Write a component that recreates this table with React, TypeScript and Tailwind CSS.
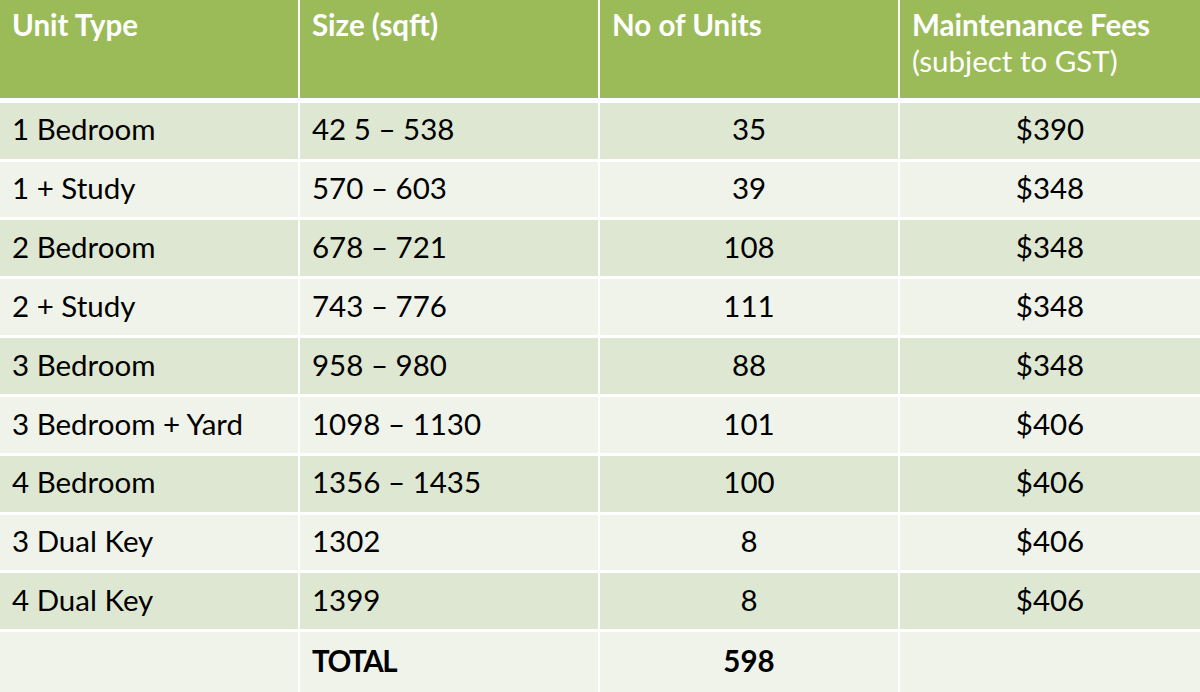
import React from 'react';

interface UnitRow {
  type: string;
  size: string;
  units: string;
  fee: string;
}

const rows: UnitRow[] = [
  { type: '1 Bedroom', size: '42 5 – 538', units: '35', fee: '$390' },
  { type: '1 + Study', size: '570 – 603', units: '39', fee: '$348' },
  { type: '2 Bedroom', size: '678 – 721', units: '108', fee: '$348' },
  { type: '2 + Study', size: '743 – 776', units: '111', fee: '$348' },
  { type: '3 Bedroom', size: '958 – 980', units: '88', fee: '$348' },
  { type: '3 Bedroom + Yard', size: '1098 – 1130', units: '101', fee: '$406' },
  { type: '4 Bedroom', size: '1356 – 1435', units: '100', fee: '$406' },
  { type: '3 Dual Key', size: '1302', units: '8', fee: '$406' },
  { type: '4 Dual Key', size: '1399', units: '8', fee: '$406' },
];

const cols = 'grid grid-cols-[298px_298px_298px_300px] gap-x-[2px]';

const App: React.FC = () => {
  return (
    <div
      className="w-[1200px] h-[692px] bg-white flex flex-col gap-[3px] overflow-hidden text-[29.5px] leading-none text-black"
      style={{ fontFamily: 'Lato, "Open Sans", sans-serif' }}
    >
      <div className={`${cols} h-[98px] mb-[2px] text-white`}>
        <div className="bg-[#9bbb59] px-3 pt-[10px] font-bold">Unit Type</div>
        <div className="bg-[#9bbb59] px-3 pt-[10px] font-bold">Size (sqft)</div>
        <div className="bg-[#9bbb59] px-3 pt-[10px] font-bold">No of Units</div>
        <div className="bg-[#9bbb59] px-3 pt-[10px] leading-[38px]">
          <div className="font-bold -mt-[4px]">Maintenance Fees</div>
          <div className="-mt-[2px]">(subject to GST)</div>
        </div>
      </div>
      {rows.map((r, i) => {
        const bg = i % 2 === 0 ? 'bg-[#dee7d1]' : 'bg-[#eff3e9]';
        return (
          <div key={r.type} className={`${cols} h-[56px]`}>
            <div className={`${bg} px-3 pb-[3px] flex items-center`}>{r.type}</div>
            <div className={`${bg} px-3 pb-[3px] flex items-center`}>{r.size}</div>
            <div className={`${bg} px-3 pb-[3px] flex items-center justify-center`}>{r.units}</div>
            <div className={`${bg} px-3 pb-[3px] flex items-center justify-center`}>{r.fee}</div>
          </div>
        );
      })}
      <div className={`${cols} h-[60px]`}>
        <div className="bg-[#eff3e9]" />
        <div className="bg-[#eff3e9] px-3 pb-[3px] flex items-center font-bold tracking-[-1.5px]">TOTAL</div>
        <div className="bg-[#eff3e9] px-3 pb-[3px] flex items-center justify-center font-bold">598</div>
        <div className="bg-[#eff3e9]" />
      </div>
    </div>
  );
};

export default App;
